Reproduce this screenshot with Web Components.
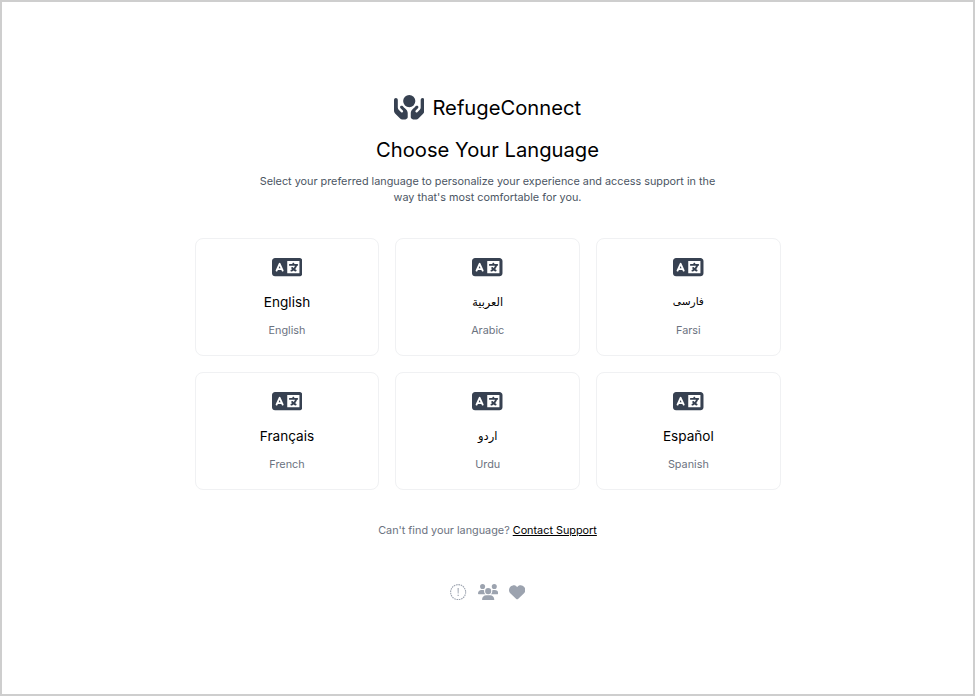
<!DOCTYPE html>
<html lang="en">
<head>
<meta charset="utf-8">
<title>RefugeConnect</title>
<style>
html, body { margin: 0; height: 100%; }
body { font-family: Inter, "Liberation Sans", "DejaVu Sans", sans-serif; color: #000; background: #fff; }
</style>
</head>
<body>
<language-page>
  <brand-mark slot="brand">RefugeConnect</brand-mark>
  <language-card label="English" lang="en">English</language-card>
  <language-card label="Arabic" lang="ar" style="--name-size:11.3px">العربية</language-card>
  <language-card label="Farsi" lang="fa" style="--name-size:10.6px">فارسی</language-card>
  <language-card label="French" lang="fr">Français</language-card>
  <language-card label="Urdu" lang="ur" style="--name-size:11.5px">اردو</language-card>
  <language-card label="Spanish" lang="es">Español</language-card>
</language-page>
<script>
const ICONS = {
  hands: ['0 0 640 512', '<path d="M320 0a128 128 0 1 1 0 256A128 128 0 1 1 320 0zM40 64c22.1 0 40 17.9 40 40l0 40 0 80 0 40.2c0 17 6.7 33.3 18.7 45.3l51.1 51.1c8.3 8.3 21.3 9.6 31 3.1c12.9-8.6 14.7-26.9 3.7-37.8l-15.2-15.2-32-32c-12.5-12.5-12.5-32.8 0-45.3s32.8-12.5 45.3 0l32 32 15.2 15.2 25.3 25.3c21 21 32.8 49.5 32.8 79.2l0 78.9c0 26.5-21.5 48-48 48l-66.7 0c-17 0-33.3-6.7-45.3-18.7L28.1 393.4C10.1 375.4 0 351 0 325.5L0 224l0-64 0-56C0 81.9 17.9 64 40 64zm560 0c22.1 0 40 17.9 40 40l0 56 0 64 0 101.5c0 25.5-10.1 49.9-28.1 67.9L512 493.3c-12 12-28.3 18.7-45.3 18.7L400 512c-26.5 0-48-21.5-48-48l0-78.9c0-29.7 11.8-58.2 32.8-79.2l25.3-25.3 15.2-15.2 32-32c12.5-12.5 32.8-12.5 45.3 0s12.5 32.8 0 45.3l-32 32-15.2 15.2c-11 11-9.2 29.2 3.7 37.8c9.7 6.5 22.7 5.2 31-3.1l51.1-51.1c12-12 18.7-28.3 18.7-45.3l0-40.2 0-80 0-40c0-22.1 17.9-40 40-40z"/>'],
  language: ['0 0 640 512', '<path d="M0 128C0 92.7 28.7 64 64 64l192 0 48 0 16 0 256 0c35.3 0 64 28.7 64 64l0 256c0 35.3-28.7 64-64 64l-256 0-16 0-48 0L64 448c-35.3 0-64-28.7-64-64L0 128zm320 0l0 256 256 0 0-256-256 0zM178.3 175.9c-3.2-7.2-10.4-11.9-18.3-11.9s-15.1 4.7-18.3 11.9l-64 144c-4.5 10.1 .1 21.9 10.2 26.4s21.9-.1 26.4-10.2l8.9-20.1 73.6 0 8.9 20.1c4.5 10.1 16.3 14.6 26.4 10.2s14.6-16.3 10.2-26.4l-64-144zM160 233.2L179 276l-38 0 19-42.8zM448 164c11 0 20 9 20 20l0 4 44 0 16 0c11 0 20 9 20 20s-9 20-20 20l-2 0-1.6 4.5c-8.9 24.4-22.4 46.6-39.6 65.4c.9 .6 1.8 1.1 2.7 1.6l18.9 11.3c9.5 5.7 12.5 18 6.9 27.4s-18 12.5-27.4 6.9l-18.9-11.3c-4.5-2.7-8.8-5.5-13.1-8.5c-10.6 7.5-21.9 14-34 19.4l-3.6 1.6c-10.1 4.5-21.9-.1-26.4-10.2s.1-21.9 10.2-26.4l3.6-1.6c6.4-2.9 12.6-6.1 18.5-9.8l-12.2-12.2c-7.8-7.8-7.8-20.5 0-28.3s20.5-7.8 28.3 0l14.6 14.6 .5 .5c12.4-13.1 22.5-28.3 29.8-45L448 228l-72 0c-11 0-20-9-20-20s9-20 20-20l52 0 0-4c0-11 9-20 20-20z"/>'],
  notice: ['0 0 512 512', '<circle cx="256" cy="256" r="236" fill="none" stroke="currentColor" stroke-width="34" stroke-dasharray="50 24.15"/><path d="M238 125h36l-5 175h-26zM238 340h36v40h-36z"/>'],
  users: ['0 0 640 512', '<path d="M144 0a80 80 0 1 1 0 160A80 80 0 1 1 144 0zM512 0a80 80 0 1 1 0 160A80 80 0 1 1 512 0zM0 298.7C0 239.8 47.8 192 106.7 192l42.7 0c15.9 0 31 3.5 44.6 9.7c-1.3 7.2-1.9 14.7-1.9 22.3c0 38.2 16.8 72.5 43.3 96c-.2 0-.4 0-.7 0L21.3 320C9.6 320 0 310.4 0 298.7zM405.3 320c-.2 0-.4 0-.7 0c26.6-23.5 43.3-57.8 43.3-96c0-7.6-.7-15-1.9-22.3c13.6-6.3 28.7-9.7 44.6-9.7l42.7 0C592.2 192 640 239.8 640 298.7c0 11.8-9.6 21.3-21.3 21.3l-213.3 0zM224 224a96 96 0 1 1 192 0 96 96 0 1 1 -192 0zM128 485.3C128 411.7 187.7 352 261.3 352l117.3 0C452.3 352 512 411.7 512 485.3c0 14.7-11.9 26.7-26.7 26.7l-330.7 0c-14.7 0-26.7-11.9-26.7-26.7z"/>'],
  heart: ['0 0 512 512', '<path d="M47.6 300.4L228.3 469.1c7.5 7 17.4 10.9 27.7 10.9s20.2-3.9 27.7-10.9L464.4 300.4c30.4-28.3 47.6-68 47.6-109.5v-5.8c0-69.9-50.5-129.5-119.4-141C347 36.5 300.6 51.4 268 84L256 96 244 84c-32.6-32.6-79-47.5-124.6-39.9C50.5 55.6 0 115.2 0 185.1v5.8c0 41.5 17.2 81.2 47.6 109.5z"/>']
};

class UiIcon extends HTMLElement {
  connectedCallback() {
    const [box, body] = ICONS[this.getAttribute('name')];
    this.attachShadow({ mode: 'open' }).innerHTML = `
      <style>:host{display:block;flex:none}svg{display:block;height:var(--icon-size,16px);fill:currentColor}</style>
      <svg viewBox="${box}" aria-hidden="true">${body}</svg>`;
  }
}

class BrandMark extends HTMLElement {
  connectedCallback() {
    this.attachShadow({ mode: 'open' }).innerHTML = `
      <style>
        :host{display:flex;justify-content:center;align-items:center;gap:8px;height:28px;font-size:20.2px;line-height:28px}
        ui-icon{color:#374151;--icon-size:24.4px;margin-top:-1px}
      </style>
      <ui-icon name="hands"></ui-icon><span><slot></slot></span>`;
  }
}

class LanguageCard extends HTMLElement {
  connectedCallback() {
    this.attachShadow({ mode: 'open' }).innerHTML = `
      <style>
        :host{display:flex;flex-direction:column;align-items:center;box-sizing:border-box;height:118px;padding-top:16.5px;border:1px solid #f0f1f3;border-radius:8px;background:#fff}
        ui-icon{color:#374151;--icon-size:24.4px}
        .name{margin-top:11px;height:22px;font-size:var(--name-size,13.6px);line-height:22px}
        .label{margin-top:10px;font-size:10.83px;line-height:16px;color:#6b7280}
      </style>
      <ui-icon name="language"></ui-icon>
      <div class="name"><slot></slot></div>
      <div class="label" lang="en">${this.getAttribute('label')}</div>`;
  }
}

class LanguagePage extends HTMLElement {
  connectedCallback() {
    this.attachShadow({ mode: 'open' }).innerHTML = `
      <style>
        :host{display:flex;flex-direction:column;align-items:center;box-sizing:border-box;height:100%;border:2px solid #cecece;padding-top:92px}
        h1{margin:14px 0 0;font-size:20.2px;font-weight:400;line-height:28px}
        p{margin:10px 0 0;width:470px;text-align:center;font-size:10.83px;line-height:16.3px;color:#4b5563}
        .grid{display:grid;grid-template-columns:repeat(3,184.7px);gap:16px;margin:31.4px 0 0 0.4px}
        .help{margin-top:33px;font-size:10.83px;line-height:16px;color:#6b7280}
        a{color:#000;text-decoration:underline}
        footer{display:flex;align-items:center;gap:11px;margin:45px 0 0 0.4px;color:#9ca3af;--icon-size:16.3px}
      </style>
      <slot name="brand"></slot>
      <h1>Choose Your Language</h1>
      <p>Select your preferred language to personalize your experience and access support in the way that's most comfortable for you.</p>
      <div class="grid"><slot></slot></div>
      <div class="help">Can't find your language? <a>Contact Support</a></div>
      <footer><ui-icon name="notice"></ui-icon><ui-icon name="users"></ui-icon><ui-icon name="heart"></ui-icon></footer>`;
  }
}

customElements.define('ui-icon', UiIcon);
customElements.define('brand-mark', BrandMark);
customElements.define('language-card', LanguageCard);
customElements.define('language-page', LanguagePage);
</script>
</body>
</html>
